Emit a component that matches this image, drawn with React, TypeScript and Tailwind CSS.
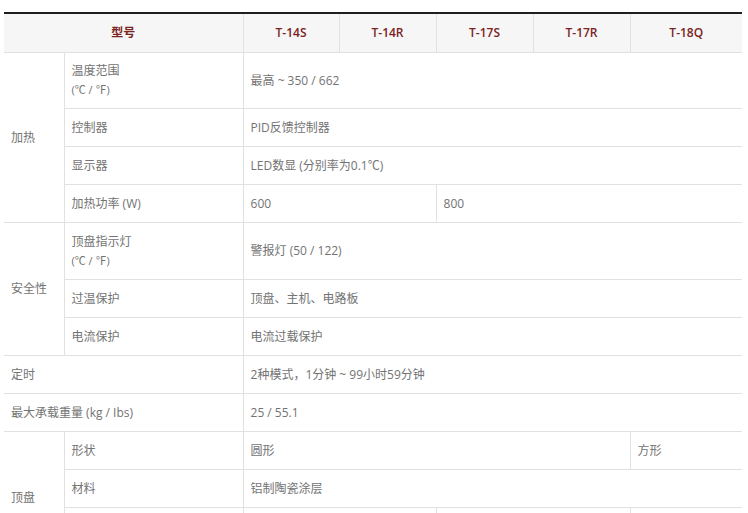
const td = "border border-[#e1e1e1] px-[7px] align-middle text-left";
const th = "border-x border-[#e1e1e1] font-semibold text-[#7b2323] text-center";

export default function App() {
  return (
    <div
      className="h-[513px] w-[748px] overflow-hidden bg-white pt-[12px] pl-[4px] text-[12px] leading-[19px] text-[#737373]"
      style={{ fontFamily: '"Open Sans", "Noto Sans CJK SC", sans-serif' }}
    >
      <table className="w-[738px] table-fixed border-collapse">
        <colgroup>
          <col className="w-[60px]" />
          <col className="w-[179px]" />
          <col className="w-[96px]" />
          <col className="w-[97px]" />
          <col className="w-[97px]" />
          <col className="w-[97px]" />
          <col className="w-[112px]" />
        </colgroup>
        <thead>
          <tr className="h-[39px] border-t-2 border-b border-t-[#1e1e1e] border-b-[#dcdcdc] bg-[#f6f6f6]">
            <th colSpan={2} className={`${th} border-l-0`}>型号</th>
            <th className={th}>T-14S</th>
            <th className={th}>T-14R</th>
            <th className={th}>T-17S</th>
            <th className={th}>T-17R</th>
            <th className={`${th} border-r-0`}>T-18Q</th>
          </tr>
        </thead>
        <tbody>
          {/* 加热 */}
          <tr className="h-[56px]">
            <td rowSpan={4} className={`${td} border-l-0 px-[6px]`}>加热</td>
            <td className={td}>
              温度范围
              <br />
              <span className="text-[11px]">(℃ / ℉)</span>
            </td>
            <td colSpan={5} className={`${td} border-r-0`}>最高 ~ 350 / 662</td>
          </tr>
          <tr className="h-[38px]">
            <td className={td}>控制器</td>
            <td colSpan={5} className={`${td} border-r-0`}>PID反馈控制器</td>
          </tr>
          <tr className="h-[38px]">
            <td className={td}>显示器</td>
            <td colSpan={5} className={`${td} border-r-0`}>LED数显 (分别率为0.1℃)</td>
          </tr>
          <tr className="h-[38px]">
            <td className={td}>加热功率 (W)</td>
            <td colSpan={2} className={td}>600</td>
            <td colSpan={3} className={`${td} border-r-0`}>800</td>
          </tr>

          {/* 安全性 */}
          <tr className="h-[57px]">
            <td rowSpan={3} className={`${td} border-l-0 px-[6px]`}>安全性</td>
            <td className={td}>
              顶盘指示灯
              <br />
              <span className="text-[11px]">(℃ / ℉)</span>
            </td>
            <td colSpan={5} className={`${td} border-r-0`}>警报灯 (50 / 122)</td>
          </tr>
          <tr className="h-[38px]">
            <td className={td}>过温保护</td>
            <td colSpan={5} className={`${td} border-r-0`}>顶盘、主机、电路板</td>
          </tr>
          <tr className="h-[38px]">
            <td className={td}>电流保护</td>
            <td colSpan={5} className={`${td} border-r-0`}>电流过载保护</td>
          </tr>

          <tr className="h-[38px]">
            <td colSpan={2} className={`${td} border-l-0 px-[6px]`}>定时</td>
            <td colSpan={5} className={`${td} border-r-0`}>2种模式，1分钟 ~ 99小时59分钟</td>
          </tr>
          <tr className="h-[38px]">
            <td colSpan={2} className={`${td} border-l-0 px-[6px]`}>最大承载重量 (kg / Ibs)</td>
            <td colSpan={5} className={`${td} border-r-0`}>25 / 55.1</td>
          </tr>

          {/* 顶盘 */}
          <tr className="h-[38px]">
            <td rowSpan={3} className={`${td} border-l-0 px-[6px]`}>顶盘</td>
            <td className={td}>形状</td>
            <td colSpan={4} className={td}>圆形</td>
            <td className={`${td} border-r-0`}>方形</td>
          </tr>
          <tr className="h-[38px]">
            <td className={td}>材料</td>
            <td colSpan={5} className={`${td} border-r-0`}>铝制陶瓷涂层</td>
          </tr>
          <tr className="h-[56px]">
            <td className={td}></td>
            <td colSpan={2} className={td}></td>
            <td colSpan={2} className={td}></td>
            <td className={`${td} border-r-0`}></td>
          </tr>
        </tbody>
      </table>
    </div>
  );
}
